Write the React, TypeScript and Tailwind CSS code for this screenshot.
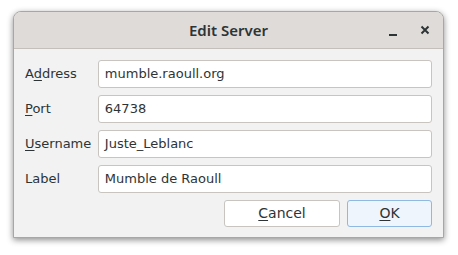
import React from 'react';

const fields = [
  { label: 'Address', key: 1, value: 'mumble.raoull.org' },
  { label: 'Port', key: 0, value: '64738' },
  { label: 'Username', key: 0, value: 'Juste_Leblanc' },
  { label: 'Label', key: -1, value: 'Mumble de Raoull' },
];

const Mnemonic: React.FC<{ text: string; at: number }> = ({ text, at }) => {
  if (at < 0) return <>{text}</>;
  return (
    <>
      {text.slice(0, at)}
      <span className="underline underline-offset-2">{text[at]}</span>
      {text.slice(at + 1)}
    </>
  );
};

export default function App() {
  return (
    <div className="w-[458px] h-[255px] bg-white pt-[11px] pl-[13px]" style={{ fontFamily: '"DejaVu Sans", sans-serif' }}>
      <div className="w-[431px] h-[227px] rounded-t-[8px] border border-[#a9a7a4] bg-[#f2f2f2] shadow-[0_2px_6px_rgba(0,0,0,0.45)] flex flex-col overflow-hidden">
        <div className="h-[37px] shrink-0 bg-[#dedbd8] border-b border-[#c4bfba] flex items-center relative">
          <div className="flex-1 text-center text-[15px] font-semibold text-[#2e3436] font-['Noto_Sans',sans-serif]">Edit Server</div>
          <div className="absolute right-[13px] top-0 h-full flex items-center gap-[22px] text-[#2e3436]">
            <svg width="10" height="10" viewBox="0 0 10 10" className="mt-[3px]"><rect x="1" y="7" width="8" height="2" fill="currentColor" /></svg>
            <svg width="10" height="10" viewBox="0 0 10 10"><path d="M1.5 1.5 L8.5 8.5 M8.5 1.5 L1.5 8.5" stroke="currentColor" strokeWidth="2" /></svg>
          </div>
        </div>
        <div className="flex flex-col gap-[7px] pl-[11px] pr-[11px] pt-[11px]">
          {fields.map((f) => (
            <div key={f.label} className="flex items-center">
              <div className="w-[73px] text-[13px] text-[#2e3436]">
                <Mnemonic text={f.label} at={f.key} />
              </div>
              <div className="w-[335px] h-[28px] bg-white border border-[#c8c5c1] rounded-[3px] flex items-center px-[6px] text-[13px] text-[#2e3436]">
                {f.value}
              </div>
            </div>
          ))}
          <div className="flex justify-end gap-[7px]">
            <button className="w-[116px] h-[27px] bg-white border border-[#c8c5c1] rounded-[3px] text-[14px] text-[#2e3436]">
              <Mnemonic text="Cancel" at={0} />
            </button>
            <button className="w-[85px] h-[27px] bg-[#eef5fc] border border-[#8fb8e2] rounded-[3px] text-[14px] text-[#2e3436]">
              <Mnemonic text="OK" at={0} />
            </button>
          </div>
        </div>
      </div>
    </div>
  );
}
